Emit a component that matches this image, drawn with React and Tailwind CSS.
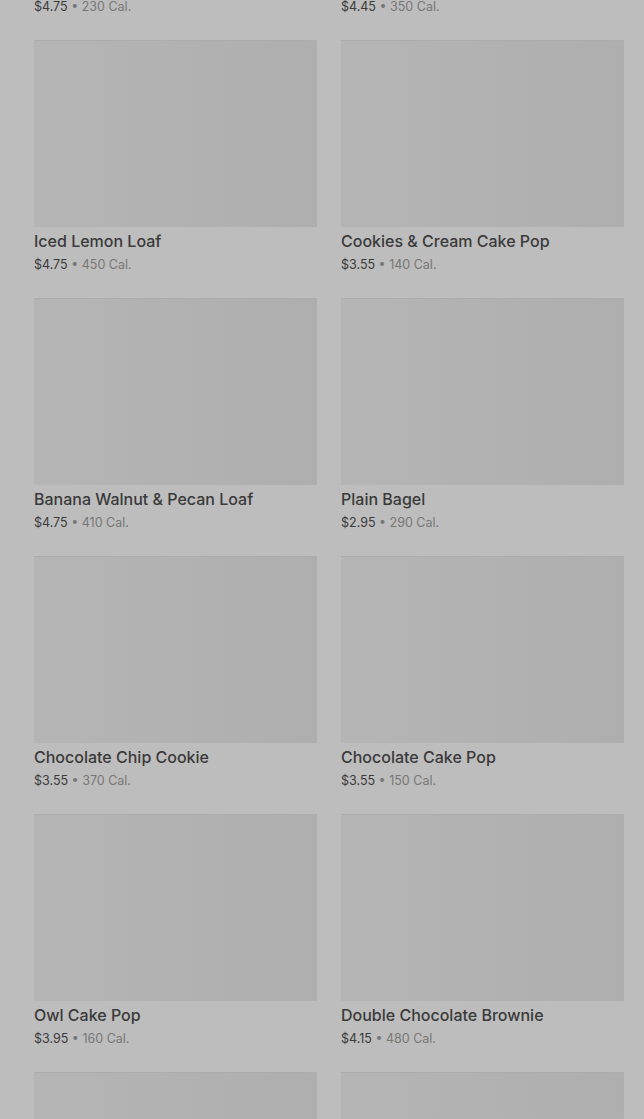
import React from 'react';

const items = [
  { name: 'Marshmallow Dream Bar', price: '$4.75', cal: '230' },
  { name: 'Cheese Danish', price: '$4.45', cal: '350' },
  { name: 'Iced Lemon Loaf', price: '$4.75', cal: '450' },
  { name: 'Cookies & Cream Cake Pop', price: '$3.55', cal: '140' },
  { name: 'Banana Walnut & Pecan Loaf', price: '$4.75', cal: '410' },
  { name: 'Plain Bagel', price: '$2.95', cal: '290' },
  { name: 'Chocolate Chip Cookie', price: '$3.55', cal: '370' },
  { name: 'Chocolate Cake Pop', price: '$3.55', cal: '150' },
  { name: 'Owl Cake Pop', price: '$3.95', cal: '160' },
  { name: 'Double Chocolate Brownie', price: '$4.15', cal: '480' },
  { name: 'Birthday Cake Pop', price: '$3.55', cal: '170' },
  { name: 'Butter Croissant', price: '$3.95', cal: '260' },
];

function ProductCard({ item }) {
  return (
    <div className="flex flex-col">
      <div className="h-[187px] w-full bg-gradient-to-r from-[#b5b5b5] to-[#aeaeae] shadow-[inset_0_1px_0_#acacac]" />
      <p className="mt-[2px] text-[16px] leading-6 font-medium text-[#3a3a3a]">{item.name}</p>
      <p className="text-[12.5px] leading-6 text-[#3a3a3a]">
        {item.price}
        <span className="text-[#777777]"> • {item.cal} Cal.</span>
      </p>
    </div>
  );
}

export default function App() {
  return (
    <div className="h-[1119px] overflow-hidden bg-[#bdbdbd] font-['Inter','Liberation_Sans',sans-serif]">
      <div className="mt-[-218px] grid grid-cols-2 gap-x-6 gap-y-[21px] pl-[34px] pr-5">
        {items.map((item) => (
          <ProductCard key={item.name} item={item} />
        ))}
      </div>
    </div>
  );
}
